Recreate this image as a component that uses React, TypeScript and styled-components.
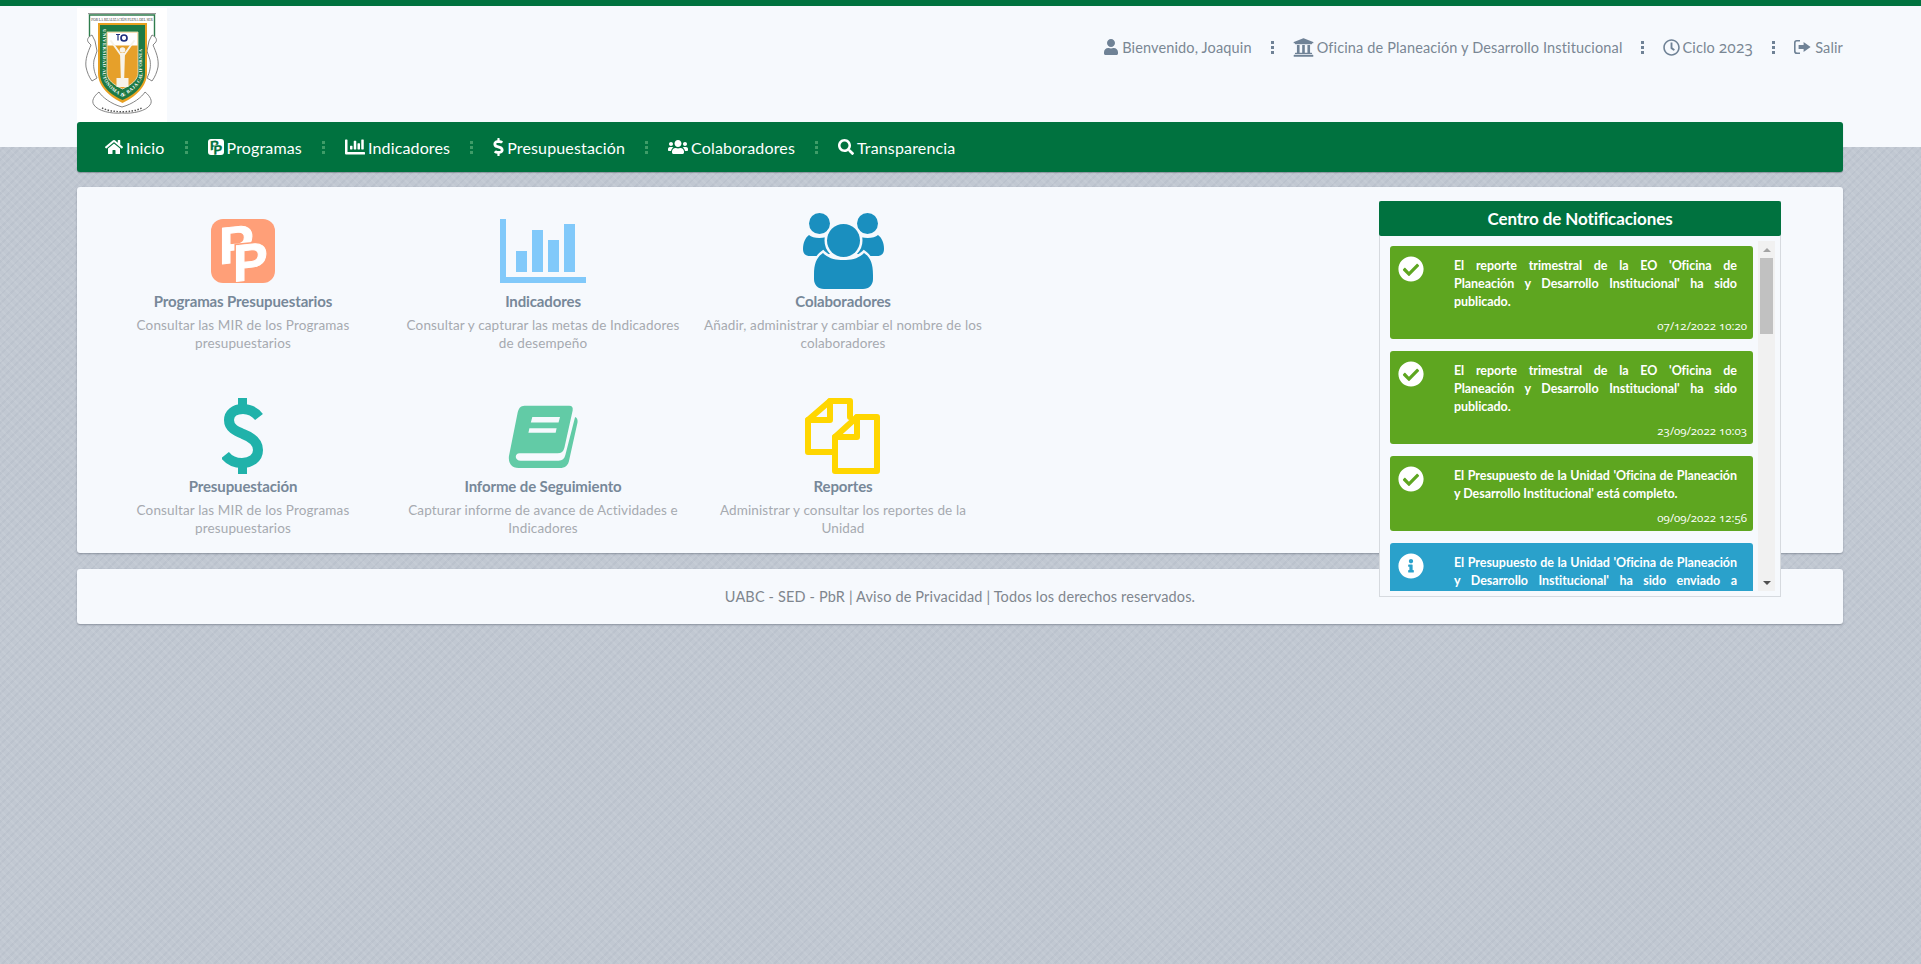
import styled, { createGlobalStyle } from 'styled-components'
import { FaHome, FaUser, FaUniversity, FaRegClock, FaChartBar, FaDollarSign, FaUsers, FaSearch, FaCheckCircle, FaInfoCircle } from 'react-icons/fa'

const GREEN = '#00723f'
const PAPER = '#f6f9fd'

const GlobalStyle = createGlobalStyle`
  html, body { margin: 0; padding: 0; }
  body {
    min-height: 964px;
    font-family: "Lato", "Open Sans", sans-serif;
    background-color: #c1c8d2;
    background-image:
      repeating-linear-gradient(45deg, rgba(255,255,255,.07) 0 2px, transparent 2px 6px),
      repeating-linear-gradient(-45deg, rgba(90,105,125,.06) 0 2px, transparent 2px 6px);
  }
`

function SignOutIcon() {
  return (
    <svg width="17" height="14" viewBox="0 0 17 14" fill="currentColor">
      <path d="M6 0v1.6H3a1.4 1.4 0 0 0-1.4 1.4v8A1.4 1.4 0 0 0 3 12.4h3V14H2.8A2.8 2.8 0 0 1 0 11.2V2.8A2.8 2.8 0 0 1 2.8 0z" />
      <path d="M9.6 2 16.6 7l-7 5V9H4.6V5h5z" />
    </svg>
  )
}

function PpMark({ size, bg, fg, radius }: { size: number; bg: string; fg: string; radius: number }) {
  return (
    <svg width={size} height={size} viewBox="0 0 64 64">
      <rect width="64" height="64" rx={radius} fill={bg} />
      <g fontFamily="Liberation Sans, sans-serif" fontWeight="700" fontSize="52" transform="skewY(-6)">
        <text x="8" y="46" fill={fg} stroke={fg} strokeWidth="1">P</text>
        <text x="22" y="65" fill={bg} stroke={bg} strokeWidth="4">P</text>
        <text x="22" y="65" fill={fg} stroke={fg} strokeWidth="1">P</text>
      </g>
    </svg>
  )
}

function BarsIcon() {
  return (
    <svg width="86" height="64" viewBox="0 0 86 64" fill="#81c9fa">
      <path d="M0 0h6v58h80v6H0z" />
      <rect x="16" y="32" width="11" height="21" />
      <rect x="32" y="11" width="11" height="42" />
      <rect x="48" y="21" width="11" height="32" />
      <rect x="64" y="5" width="11" height="48" />
    </svg>
  )
}

function GroupIcon() {
  return (
    <svg width="81" height="76" viewBox="0 0 81 76" fill="#1a8fbf">
      <circle cx="16.500" cy="10.500" r="10.500" />
      <circle cx="64.500" cy="10.500" r="10.500" />
      <path d="M6 22c4 4 16 4 22 0l2 18-10 3H7c-4 0-7-2-7-7 0-6 2-11 6-14z" />
      <path d="M75 22c-4 4-16 4-22 0l-2 18 10 3h13c4 0 7-2 7-7 0-6-2-11-6-14z" />
      <circle cx="40.500" cy="27.500" r="16.500" stroke={PAPER} strokeWidth="5" paintOrder="stroke" />
      <path d="M11 62c0-12 3-18 9-22 6 6 13 7 20.500 7S55 46 61 40c6 4 9 10 9 22v4c0 6-4 10-10 10H21c-6 0-10-4-10-10z" stroke={PAPER} strokeWidth="5" paintOrder="stroke" />
    </svg>
  )
}

function DollarIcon() {
  return (
    <svg width="42" height="76" viewBox="0 0 42 76" fill="none" stroke="#20b2aa" strokeWidth="10">
      <path d="M37 19c-4-5-10-8-16-8C12 11 7 16 7 22c0 8 7 11 14 14 8 3 15 7 15 16 0 8-7 13-16 13-7 0-13-3-17-8" />
      <path d="M20.500 0v13M20.500 63v13" strokeWidth="9" />
    </svg>
  )
}

function BookIcon() {
  return (
    <svg width="70" height="65" viewBox="0 0 72 70" preserveAspectRatio="none">
      <path fillRule="evenodd" fill="#62cba6" d="M17 2h46c3 0 4 2 3.500 5L58 47c-1 4-3 6-7 6H12c-3 0-4 2-4 4s2 4 5 4h39c4 0 6-2 7-6l10-41c2 1 3 3 2.500 6L63 60c-1 6-4 9-10 9H11C4 69 0 64 1 56L10 9c1-4 3-7 7-7zM25 14l-1.500 6H52l1.500-6zM22 26l-1 5h28l1-5z" />
    </svg>
  )
}

function PagesIcon() {
  return (
    <svg width="76" height="76" viewBox="0 0 76 76" fill="none" stroke="#ffd600" strokeWidth="6" strokeLinejoin="round" strokeLinecap="round">
      <path d="M30 54H3V22L25 3h20v16" />
      <path d="M25 3v19H3" />
      <path d="M30 73V39L52 19h20v54z" />
      <path d="M52 19v20H30" />
    </svg>
  )
}

function Crest() {
  return (
    <svg width="90" height="114" viewBox="0 0 90 114">
      <rect width="90" height="114" fill="#fff" />
      <rect x="11" y="5" width="68" height="1.200" fill="#999" />
      <path d="M12.500 30V7h65v23" fill="none" stroke="#2f7d4d" strokeWidth="1.400" />
      <text x="45" y="13" textAnchor="middle" fontSize="3.400" fontFamily="Liberation Serif, serif" fill="#333">POR LA REALIZACIÓN PLENA DEL SER</text>
      <g fill="#fff" stroke="#777" strokeWidth=".9">
        <path d="M15 27c-4 2-6 5-3 8l2 2c-3 7-6 14-5 22 1 5 3 10 6 14l5-3c-3-6-4-12-3-18l3-9-2-10z" />
        <path d="M75 27c4 2 6 5 3 8l-2 2c3 7 6 14 5 22-1 5-3 10-6 14l-5-3c3-6 4-12 3-18l-3-9 2-10z" />
        <path d="M22 84c-5 4-8 9-5 13 4 6 17 9 28 8 11 1 24-2 28-8 3-4 0-9-5-13-3 5-12 12-23 15-11-3-20-10-23-15z" />
      </g>
      <path d="M25 100c10 5 30 5 40 0" fill="none" stroke="#555" strokeWidth="1.500" strokeDasharray="1.500 1.500" />
      <path d="M21 15h49v50c0 14-12 24-24.500 30C33 89 21 79 21 65z" fill="#e8a021" />
      <path d="M23 17h45v48c0 13-11 22-22.500 27C34 87 23 78 23 65z" fill="#1d7a45" />
      <path id="crest-band" d="M25.500 21v44c0 10 9 18 20 24 11-6 20-14 20-24V21" fill="none" />
      <text fontSize="4.800" fontWeight="700" fontFamily="Liberation Serif, serif" fill="#fff" letterSpacing=".42">
        <textPath href="#crest-band">UNIVERSIDAD AUTÓNOMA DE BAJA CALIFORNIA</textPath>
      </text>
      <path d="M30 24h31v41c0 7-7 12-15.500 16C37 77 30 72 30 65z" fill="#e6a02a" stroke="#f4e7c8" strokeWidth=".8" />
      <rect x="30.500" y="24.500" width="30" height="13" fill="#fff" />
      <circle cx="47" cy="30" r="3" fill="none" stroke="#20307e" strokeWidth="1.700" />
      <path d="M39 26.500h4M41 26.500v6" stroke="#20307e" strokeWidth="1.200" />
      <path d="M34 33 44 47M57 33 47 47" stroke="#f7f3ea" strokeWidth="2" strokeLinecap="round" />
      <g fill="#f7f3ea">
        <path d="M43 45h5l-.8 25h-3.400z" />
        <circle cx="45.500" cy="42" r="2.800" />
        <rect x="39.500" y="70" width="12" height="9" />
      </g>
    </svg>
  )
}

const Header = styled.header`
  height: 141px;
  border-top: 6px solid ${GREEN};
  background: ${PAPER};
`

const HeaderInner = styled.div`
  width: 1766px;
  margin-left: 77px;
  display: flex;
  justify-content: space-between;
  align-items: flex-start;
`

const Logo = styled.div`
  margin-top: 2px;
  height: 114px;
  line-height: 0;
`

const UserBar = styled.div`
  display: flex;
  align-items: center;
  height: 20px;
  margin-top: 31px;
  color: #7a8794;
  font-size: 14.5px;
  letter-spacing: 0.14px;
  white-space: nowrap;
`

const UserItem = styled.span<{ $gap: number }>`
  display: inline-flex;
  align-items: center;
  gap: ${p => p.$gap}px;
  color: #7a8794;

  svg { color: #6f8296; }
`

const OldNum = styled.span`
  font-family: "Open Sans", "Lato", sans-serif;
  font-variant-numeric: oldstyle-nums;
  font-size: 15.5px;
`

const Dots = styled.span<{ $color: string; $gap: number }>`
  display: inline-flex;
  flex-direction: column;
  gap: 2px;
  margin: 0 ${p => p.$gap}px;

  i {
    display: block;
    width: 3px;
    height: 3px;
    background: ${p => p.$color};
  }
`

const Nav = styled.nav`
  position: relative;
  width: 1766px;
  height: 50px;
  margin: -25px 0 0 77px;
  padding-left: 28px;
  box-sizing: border-box;
  display: flex;
  align-items: center;
  background: ${GREEN};
  border-radius: 3px;
  box-shadow: 0 1px 1px rgba(60, 70, 80, 0.4);
  color: #fff;
  font-size: 16px;
  letter-spacing: 0.15px;
  white-space: nowrap;
`

const NavItem = styled.span`
  display: inline-flex;
  align-items: center;
  gap: 3px;
`

const NavDollar = styled(FaDollarSign)`
  width: 11px;
`

const Panel = styled.section`
  position: relative;
  width: 1766px;
  height: 366px;
  margin: 15px 0 0 77px;
  padding: 26px 0 0 16px;
  box-sizing: border-box;
  background: ${PAPER};
  border-radius: 3px;
  box-shadow: 0 1px 2px rgba(70, 80, 95, 0.45);
`

const Grid = styled.div`
  display: grid;
  grid-template-columns: repeat(3, 300px);
  grid-auto-rows: 185px;
`

const Tile = styled.div`
  display: flex;
  flex-direction: column;
  align-items: center;
  text-align: center;
  padding: 0 6px;
`

const TileIcon = styled.div`
  height: 76px;
  display: flex;
  align-items: center;
  justify-content: center;
  line-height: 0;
`

const TileTitle = styled.div`
  margin-top: 2px;
  height: 20px;
  line-height: 20px;
  font-size: 15px;
  font-weight: 700;
  letter-spacing: -0.12px;
  color: #778899;
`

const TileText = styled.div`
  margin-top: 5px;
  font-size: 13.5px;
  line-height: 18px;
  letter-spacing: 0.13px;
  color: #a6aab0;
`

const Notifications = styled.aside`
  position: absolute;
  top: 14px;
  right: 62px;
  width: 402px;
  height: 396px;
  box-sizing: border-box;
  display: flex;
  flex-direction: column;
  background: ${PAPER};
  border: 1px solid #d6dadf;
  border-top: 0;
`

const NotifHeader = styled.div`
  height: 35px;
  margin: 0 -1px;
  line-height: 35px;
  flex: none;
  text-align: center;
  background: ${GREEN};
  border-radius: 2px;
  color: #fff;
  font-size: 17px;
  font-weight: 700;
  letter-spacing: -0.1px;
`

const NotifBody = styled.div`
  display: flex;
  height: 350px;
  margin-top: 5px;
  padding: 0 5px 0 10px;
  gap: 5px;
`

const NotifList = styled.div`
  width: 363px;
  overflow: hidden;
  padding-top: 5px;
`

const Card = styled.div<{ $tone: 'ok' | 'info'; $height: number }>`
  position: relative;
  height: ${p => p.$height}px;
  margin-bottom: 12px;
  padding: 11px 16px 0 64px;
  box-sizing: border-box;
  border-radius: 3px;
  background: ${p => (p.$tone === 'ok' ? '#5ea620' : '#2aa1cb')};
  color: #fff;
  flex: none;

  & > svg {
    position: absolute;
    left: 8px;
    top: 10px;
  }
`

const CardText = styled.div`
  font-size: 12.5px;
  line-height: 18px;
  font-weight: 700;
  letter-spacing: -0.05px;
  text-align: justify;
`

const CardDate = styled.div`
  position: absolute;
  right: 6px;
  bottom: 6px;
  font-family: "Open Sans", "Lato", sans-serif;
  font-variant-numeric: oldstyle-nums;
  font-size: 11.5px;
  line-height: 14px;
`

const Scrollbar = styled.div`
  width: 17px;
  flex: none;
  display: flex;
  flex-direction: column;
  align-items: center;
  background: #f1f1f1;
`

const ScrollArrow = styled.div<{ $dir: 'up' | 'down' }>`
  height: 17px;
  flex: none;
  display: flex;
  align-items: center;
  justify-content: center;

  &::before {
    content: '';
    border-left: 4px solid transparent;
    border-right: 4px solid transparent;
    ${p => (p.$dir === 'up' ? 'border-bottom: 4px solid #a3a3a3;' : 'border-top: 4px solid #505050;')}
  }
`

const ScrollThumb = styled.div`
  width: 13px;
  height: 76px;
  flex: none;
  background: #c1c1c1;
`

const ScrollTrack = styled.div`
  flex: 1;
`

const Footer = styled.footer`
  width: 1766px;
  height: 55px;
  margin: 16px 0 0 77px;
  background: ${PAPER};
  border-radius: 3px;
  box-shadow: 0 1px 2px rgba(70, 80, 95, 0.45);
  color: #7f868e;
  font-size: 14.5px;
  letter-spacing: 0.15px;
  line-height: 55px;
  text-align: center;
`

const tiles = [
  { title: 'Programas Presupuestarios', text: 'Consultar las MIR de los Programas presupuestarios', icon: <PpMark size={64} bg="#ff9f78" fg="#fff" radius={12} /> },
  { title: 'Indicadores', text: 'Consultar y capturar las metas de Indicadores de desempeño', icon: <BarsIcon /> },
  { title: 'Colaboradores', text: 'Añadir, administrar y cambiar el nombre de los colaboradores', icon: <GroupIcon /> },
  { title: 'Presupuestación', text: 'Consultar las MIR de los Programas presupuestarios', icon: <DollarIcon /> },
  { title: 'Informe de Seguimiento', text: 'Capturar informe de avance de Actividades e Indicadores', icon: <BookIcon /> },
  { title: 'Reportes', text: 'Administrar y consultar los reportes de la Unidad', icon: <PagesIcon /> },
]

const notifications = [
  { tone: 'ok' as const, height: 93, date: '07/12/2022 10:20', text: "El reporte trimestral de la EO 'Oficina de Planeación y Desarrollo Institucional' ha sido publicado." },
  { tone: 'ok' as const, height: 93, date: '23/09/2022 10:03', text: "El reporte trimestral de la EO 'Oficina de Planeación y Desarrollo Institucional' ha sido publicado." },
  { tone: 'ok' as const, height: 75, date: '09/09/2022 12:56', text: "El Presupuesto de la Unidad 'Oficina de Planeación y Desarrollo Institucional' está completo." },
  { tone: 'info' as const, height: 93, date: '', text: "El Presupuesto de la Unidad 'Oficina de Planeación y Desarrollo Institucional' ha sido enviado a revisión." },
]

const Sep = ({ color, gap }: { color: string; gap: number }) => (
  <Dots $color={color} $gap={gap}><i /><i /><i /></Dots>
)

const navSep = <Sep color="#3f9c68" gap={20} />
const userSep = <Sep color="#6f8296" gap={19} />

export default function App() {
  return (
    <>
      <GlobalStyle />
      <Header>
        <HeaderInner>
          <Logo><Crest /></Logo>
          <UserBar>
            <UserItem $gap={3}><FaUser size={16} />Bienvenido, Joaquin</UserItem>
            {userSep}
            <UserItem $gap={3}><FaUniversity size={21} />Oficina de Planeación y Desarrollo Institucional</UserItem>
            {userSep}
            <UserItem $gap={2}><FaRegClock size={17} /><span>Ciclo <OldNum>2023</OldNum></span></UserItem>
            {userSep}
            <UserItem $gap={4}><SignOutIcon />Salir</UserItem>
          </UserBar>
        </HeaderInner>
      </Header>
      <Nav>
        <NavItem><FaHome size={18} />Inicio</NavItem>
        {navSep}
        <NavItem><PpMark size={16} bg="#fff" fg={GREEN} radius={12} />Programas</NavItem>
        {navSep}
        <NavItem><FaChartBar size={20} />Indicadores</NavItem>
        {navSep}
        <NavItem><NavDollar size={18} />Presupuestación</NavItem>
        {navSep}
        <NavItem><FaUsers size={20} />Colaboradores</NavItem>
        {navSep}
        <NavItem><FaSearch size={16} />Transparencia</NavItem>
      </Nav>
      <Panel>
        <Grid>
          {tiles.map(t => (
            <Tile key={t.title}>
              <TileIcon>{t.icon}</TileIcon>
              <TileTitle>{t.title}</TileTitle>
              <TileText>{t.text}</TileText>
            </Tile>
          ))}
        </Grid>
        <Notifications>
          <NotifHeader>Centro de Notificaciones</NotifHeader>
          <NotifBody>
            <NotifList>
              {notifications.map(n => (
                <Card key={n.date + n.tone} $tone={n.tone} $height={n.height}>
                  {n.tone === 'ok' ? <FaCheckCircle size={26} /> : <FaInfoCircle size={26} />}
                  <CardText>{n.text}</CardText>
                  {n.date && <CardDate>{n.date}</CardDate>}
                </Card>
              ))}
            </NotifList>
            <Scrollbar>
              <ScrollArrow $dir="up" />
              <ScrollThumb />
              <ScrollTrack />
              <ScrollArrow $dir="down" />
            </Scrollbar>
          </NotifBody>
        </Notifications>
      </Panel>
      <Footer>UABC - SED - PbR | Aviso de Privacidad | Todos los derechos reservados.</Footer>
    </>
  )
}
